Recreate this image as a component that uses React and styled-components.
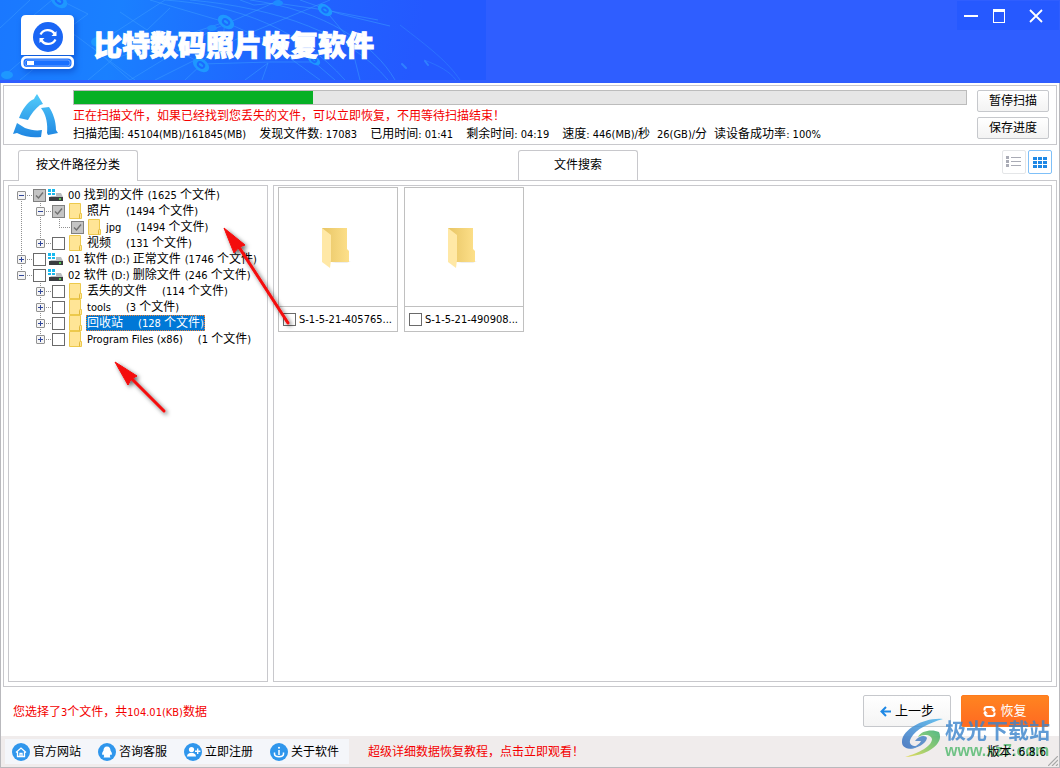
import React, { useState } from "react";
import styled, { createGlobalStyle, css } from "styled-components";

const line = "#c8c8cc";
const red = "#f40000";

const GlobalStyle = createGlobalStyle`
  * { box-sizing: border-box; }
  body {
    margin: 0;
    color: #000;
    background: #fff;
    font: 12px/16px "DejaVu Sans Condensed", "Noto Sans CJK SC", sans-serif;
  }
  button, input { font: inherit; color: inherit; margin: 0; }
  button { padding: 0; cursor: pointer; }
  ul { list-style: none; margin: 0; padding: 0; }
  p { margin: 0; }
`;

const Window = styled.div`
  position: relative;
  display: flex;
  flex-direction: column;
  min-height: 100vh;
  border: solid #b9b9bd;
  border-width: 0 1px 1px;
  background: #fff;
`;

/* Latin letters and digits are set one size below the Chinese text. */
const Latin = styled.span`
  font-size: 11px;
`;

const Mixed = ({ text }) =>
  text
    .split(/([\x20-\x7e]+)/)
    .filter(Boolean)
    .map((run, i) => (/^[\x20-\x7e]/.test(run) ? <Latin key={i}>{run}</Latin> : run));

/* ---------- header ---------- */

const Header = styled.header`
  display: flex;
  justify-content: space-between;
  align-items: flex-start;
  height: 83px;
  margin: 0 -1px;
  background: #2f5eff;
`;

const Brand = styled.div`
  position: relative;
  display: flex;
  align-items: flex-start;
  gap: 18px;
  width: 486px;
  height: 80px;
  padding: 14px 0 0 20px;
  background: linear-gradient(100deg, #1a78ff 0, #1a80ff 24%, #1f68ff 52%, #2459ff 85%);
`;

const BrandArt = styled.svg`
  position: absolute;
  inset: 0;
`;

const Logo = styled.svg`
  position: relative;
  flex: none;
  filter: drop-shadow(2px 3px 3px rgba(0, 40, 160, 0.4));
`;

const Title = styled.h1`
  position: relative;
  margin: 0;
  padding-top: 10px;
  font: 900 28px/40px "Noto Sans CJK SC", sans-serif;
  color: #fff;
  -webkit-text-stroke: 1px #fff;
  white-space: nowrap;
`;

const WindowControls = styled.div`
  display: flex;
  align-items: center;
  margin: 1px 1px 0 0;
  height: 29px;
  background: #2659ff;
`;

const WindowButton = styled.button`
  display: grid;
  place-items: center;
  width: ${(p) => (p.$wide ? 46 : 28)}px;
  height: 29px;
  border: 0;
  background: none;
`;

/* ---------- scan status ---------- */

const ScanPanel = styled.section`
  display: flex;
  margin: 2px 2px 0;
  height: 60px;
  padding: 4px 7px 4px 9px;
  border: 1px solid ${line};
`;

const ScanBody = styled.div`
  flex: 1;
  min-width: 0;
  margin: 0 10px 0 14px;
`;

const ProgressTrack = styled.div`
  height: 15px;
  border: 1px solid #bcbcbc;
  background: #e6e6e6;
`;

const ProgressFill = styled.div`
  height: 100%;
  background: #06b025;
`;

const Notice = styled.p`
  padding-top: 3px;
  color: ${red};
  white-space: nowrap;
`;

const Stats = styled.p`
  display: flex;
  gap: 13px;
  padding-top: 2px;
  white-space: nowrap;
`;

const StatGroup = styled.span`
  display: flex;
  gap: 7px;
`;

const ScanButtons = styled.div`
  display: flex;
  flex-direction: column;
  gap: 5px;
`;

const SmallButton = styled.button`
  width: 72px;
  height: 22px;
  border: 1px solid #c6c8cc;
  border-radius: 2px;
  background: linear-gradient(#fff, #f3f3f3);
`;

/* ---------- tabs ---------- */

const TabBar = styled.div`
  display: flex;
  height: 35px;
  padding: 5px 7px 0 17px;
`;

const Tab = styled.button`
  position: relative;
  width: 120px;
  height: ${(p) => (p.$active ? 31 : 30)}px;
  padding-bottom: ${(p) => (p.$active ? 2 : 1)}px;
  margin-right: ${(p) => (p.$spaced ? 380 : 0)}px;
  border: 1px solid ${line};
  border-bottom: 0;
  border-radius: 3px 3px 0 0;
  background: #fff;
`;

const ViewSwitch = styled.div`
  display: flex;
  gap: 2px;
  margin-left: auto;
`;

const ViewButton = styled.button`
  display: grid;
  place-items: center;
  width: 24px;
  height: 24px;
  border: 1px solid ${(p) => (p.$active ? "#7fc0f8" : "#e4e6e8")};
  border-radius: 2px;
  background: #fff;
  color: ${(p) => (p.$active ? "#1e88e5" : "#a9abb5")};
`;

/* ---------- content ---------- */

const Content = styled.main`
  flex: 1;
  display: flex;
  gap: 5px;
  margin: 0 2px;
  padding: 4px;
  border: 1px solid ${line};
`;

const TreePanel = styled.div`
  width: 260px;
  flex: none;
  padding: 1px 0 0 3px;
  border: 1px solid ${line};
`;

const FilePanel = styled.div`
  flex: 1;
  min-width: 0;
  display: flex;
  align-items: flex-start;
  gap: 6px;
  padding: 1px 4px;
  border: 1px solid ${line};
`;

const Row = styled.li`
  display: flex;
  align-items: center;
  height: 16px;
  white-space: nowrap;
`;

const dotsV = "repeating-linear-gradient(#909090 0 1px, transparent 1px 2px)";
const dotsH = "repeating-linear-gradient(90deg, #909090 0 1px, transparent 1px 2px)";
const guides = {
  none: css``,
  through: css`background: ${dotsV} 9px 0 / 1px 16px no-repeat;`,
  tee: css`background: ${dotsV} 9px 0 / 1px 16px no-repeat, ${dotsH} 9px 8px / 12px 1px no-repeat;`,
  end: css`background: ${dotsV} 9px 0 / 1px 8px no-repeat, ${dotsH} 9px 8px / 12px 1px no-repeat;`,
  start: css`background: ${dotsV} 9px 8px / 1px 8px no-repeat, ${dotsH} 9px 8px / 12px 1px no-repeat;`,
};

const Guide = styled.span`
  flex: none;
  width: ${(p) => (p.$last ? 21 : 19)}px;
  height: 16px;
  padding: 4px 0 0 5px;
  ${(p) => guides[p.$kind]}
`;

const Expander = styled.button`
  display: block;
  width: 9px;
  height: 9px;
  border: 1px solid #919191;
  border-radius: 1px;
  background:
    linear-gradient(#31479a, #31479a) center / 5px 1px no-repeat,
    ${(p) => (p.$open ? "" : "linear-gradient(#31479a, #31479a) center / 1px 5px no-repeat,")}
    #f4f4f4;
`;

const Check = styled.input`
  appearance: none;
  flex: none;
  width: 13px;
  height: 13px;
  border: 1px solid #6a6a6a;
  background: #fff;
  &:checked {
    border-color: #808080;
    background: #c4c4c4
      url("data:image/svg+xml,%3Csvg xmlns='http://www.w3.org/2000/svg' width='11' height='11'%3E%3Cpath d='M2 5.5l2.5 2.5L9 2.5' fill='none' stroke='%23707070' stroke-width='1.4'/%3E%3C/svg%3E");
  }
`;

const NodeIcon = styled.svg`
  flex: none;
  margin: 0 3px 0 2px;
`;

const NodeLabel = styled.label`
  display: flex;
  gap: ${(p) => (p.$root ? 4 : 15)}px;
  height: 16px;
  padding: 0 1px;
  ${(p) =>
    p.$selected &&
    css`
      color: #fff;
      background: #0078d7;
      outline: 1px dotted #f08030;
      outline-offset: -1px;
    `}
`;

const Tile = styled.figure`
  width: 120px;
  margin: 0;
  border: 1px solid #c0c0c0;
`;

const Thumb = styled.div`
  display: flex;
  align-items: center;
  height: 119px;
  padding: 2px 0 0 42px;
  border-bottom: 1px solid #c0c0c0;
`;

const Caption = styled.figcaption`
  display: flex;
  align-items: center;
  gap: 3px;
  height: 24px;
  padding: 0 4px;
`;

const FileName = styled.label`
  white-space: nowrap;
`;

/* ---------- footer ---------- */

const Actions = styled.section`
  display: flex;
  align-items: center;
  gap: 10px;
  height: 49px;
  padding: 0 10px 1px 12px;
`;

const Selection = styled.p`
  flex: 1;
  padding-top: 3px;
  color: ${red};
`;

const ActionButton = styled.button`
  display: flex;
  align-items: center;
  justify-content: center;
  gap: 4px;
  width: 88px;
  height: 32px;
  font-size: 13px;
  border: 1px solid ${(p) => (p.$primary ? "#ff7a1c" : "#c6c8cc")};
  border-radius: 2px;
  color: ${(p) => (p.$primary ? "#fff" : "#000")};
  background: ${(p) => (p.$primary ? "linear-gradient(#ff8420, #ff6a22)" : "linear-gradient(#fff, #f4f4f4)")};
`;

const StatusBar = styled.footer`
  display: flex;
  align-items: center;
  height: 31px;
  padding: 0 13px 0 4px;
  background: #f0ecec;
`;

const Links = styled.nav`
  display: flex;
  align-items: center;
  gap: 17px;
  height: 25px;
  padding: 0 10px 0 7px;
  background: #f4f6fa;
`;

const FootLink = styled.a`
  display: flex;
  align-items: center;
  gap: 3px;
  color: #000;
  text-decoration: none;
`;

const Promo = styled.a`
  margin-left: 19px;
  color: ${red};
  text-decoration: none;
`;

const Version = styled.span`
  position: relative;
  z-index: 1;
  margin-left: auto;
`;

const Grip = styled.svg`
  position: absolute;
  right: 1px;
  bottom: 1px;
`;

/* ---------- overlays ---------- */

const Overlay = styled.svg`
  position: absolute;
  left: 0;
  top: 0;
  pointer-events: none;
`;

const Watermark = styled.div`
  position: absolute;
  right: 9px;
  bottom: 7px;
  display: flex;
  align-items: center;
  gap: 2px;
  opacity: 0.8;
  pointer-events: none;
`;

const WatermarkText = styled.div`
  font: 700 21px/26px "Noto Sans CJK SC", sans-serif;
  color: #3a84cc;
  white-space: nowrap;
`;

const WatermarkUrl = styled.div`
  font: 700 16px/18px "Liberation Sans", sans-serif;
  color: #50b86c;
`;

const FolderIcon = () => (
  <NodeIcon width="16" height="16" viewBox="0 0 16 16" aria-hidden="true">
    <path d="M2.500 .5H13.500V10.500H14.500V15.500H2.500Z" fill="#ffe596" stroke="#edc94c" />
    <path d="M12.500 15.500V11.500Q12.500 10.500 13.500 10.500" fill="none" stroke="#e0b73c" />
  </NodeIcon>
);

const DriveIcon = () => (
  <NodeIcon width="16" height="16" viewBox="0 0 16 16" aria-hidden="true">
    <path d="M0 2h3v3H0zM4 2h3v3H4zM0 6h3v2H0zM4 6h3v2H4z" fill="#18b9ee" />
    <path d="M8 6H13L15 10H2L3 9H8Z" fill="#b9bdc0" />
    <rect x="1" y="10" width="14" height="4" fill="#3a3d40" />
    <rect x="11" y="11" width="2" height="2" fill="#52c852" />
  </NodeIcon>
);

const BigFolder = ({ id }) => (
  <svg width="30" height="42" viewBox="0 0 30 42" aria-hidden="true">
    <defs>
      <linearGradient id={id} x1="0" x2="1">
        <stop offset="0" stopColor="#e8c565" />
        <stop offset="1" stopColor="#fde08a" />
      </linearGradient>
    </defs>
    <path d="M20 34h10l-4 2H10z" fill="#eee" />
    <path d="M1 1H26V22L28 24V35H1Z" fill={`url(#${id})`} />
    <path d="M1 1L10 8V33L9 41L1 35Z" fill="#ffe8a6" />
  </svg>
);

const footIcons = {
  home: <path d="M4 9.500L9 5L14 9.500M5.500 9V13.500H12.500V9M8 13.500V10.500H10V13.500" fill="none" stroke="#fff" strokeWidth="1.300" />,
  chat: <path d="M9 3.500C11.500 3.500 12.500 5.500 12.500 7.500C13.500 9 14.500 10.500 13.500 12L12.500 11.500L11.800 13L12.500 14.500H5.500L6.200 13L5.500 11.500L4.500 12C3.500 10.500 4.500 9 5.500 7.500C5.500 5.500 6.500 3.500 9 3.500Z" fill="#fff" />,
  user: (
    <g fill="#fff">
      <circle cx="7.500" cy="6.500" r="2.600" />
      <path d="M3 13.500C3 8.500 12 8.500 12 13.500ZM11 7.500h2v-2h1.400v2h2v1.400h-2v2H13v-2h-2z" />
    </g>
  ),
  about: (
    <g fill="none" stroke="#fff" strokeWidth="1.500">
      <path d="M9 7V12M4.500 9.500V11C4.500 14.500 13.500 14.500 13.500 11V9.500" />
      <circle cx="9" cy="4.800" r="1" fill="#fff" stroke="none" />
    </g>
  ),
};

const links = [
  ["home", "官方网站"],
  ["chat", "咨询客服"],
  ["user", "立即注册"],
  ["about", "关于软件"],
];

const nodes = [
  { g: ["start"], open: true, on: true, name: "00 找到的文件", count: "(1625 个文件)" },
  { g: ["through", "tee"], open: true, on: true, name: "照片", count: "(1494 个文件)" },
  { g: ["through", "through", "end"], leaf: true, on: true, name: "jpg", count: "(1494 个文件)" },
  { g: ["through", "end"], name: "视频", count: "(131 个文件)" },
  { g: ["tee"], name: "01 软件 (D:) 正常文件", count: "(1746 个文件)" },
  { g: ["end"], open: true, name: "02 软件 (D:) 删除文件", count: "(246 个文件)" },
  { g: ["none", "tee"], name: "丢失的文件", count: "(114 个文件)" },
  { g: ["none", "tee"], name: "tools", count: "(3 个文件)" },
  { g: ["none", "tee"], name: "回收站", count: "(128 个文件)", selected: true },
  { g: ["none", "end"], name: "Program Files (x86)", count: "(1 个文件)" },
];

function TreeNode({ node, index }) {
  const [on, setOn] = useState(!!node.on);
  const root = node.g.length === 1;
  return (
    <Row>
      {node.g.map((kind, i) => {
        const last = i === node.g.length - 1;
        return (
          <Guide key={i} $kind={kind} $last={last}>
            {last && !node.leaf && <Expander $open={node.open} aria-label="展开或折叠" />}
          </Guide>
        );
      })}
      <Check type="checkbox" id={`node-${index}`} checked={on} onChange={() => setOn(!on)} />
      {root ? <DriveIcon /> : <FolderIcon />}
      <NodeLabel htmlFor={`node-${index}`} $root={root} $selected={node.selected}>
        <span><Mixed text={node.name} /></span>
        <span><Mixed text={node.count} /></span>
      </NodeLabel>
    </Row>
  );
}

const Ring = ({ x, y, r = 7 }) => (
  <g transform={`rotate(35 ${x} ${y})`}>
    <ellipse cx={x} cy={y} rx={r + 2} ry={r - 1} fill="#1e98ff" />
    <ellipse cx={x} cy={y} rx={r / 2} ry={r / 3} fill="none" stroke="#1b6cff" strokeWidth="2" />
  </g>
);

const HeaderArt = () => (
  <BrandArt width="486" height="80" viewBox="0 0 486 80" aria-hidden="true">
    <g fill="none" stroke="#3a9aff" strokeOpacity=".55" strokeWidth="1">
      <path d="M0 28L30 0M5 75L48 38L28 20L52 0M60 0L88 14L50 42M20 80L75 35L60 20M75 35L135 80M88 80L112 60M92 47L130 80M100 42L165 0M120 12L147 30L170 8M150 0L225 22L265 40L320 80" />
      <path d="M165 0C240 5 300 30 345 80M190 0C280 8 350 35 388 80M250 0C325 10 375 45 395 80M300 0L340 14L390 26M240 0L254 5L276 3L325 10L378 20" />
      <path d="M110 60L225 22M130 80L212 30L280 0M155 80L245 35L330 0M185 80L202 64L270 62L314 62L335 80M202 64L170 46M245 80L268 63L262 80M225 22L222 45L200 64M325 10L350 40L360 80" />
      <path d="M400 25C430 48 448 62 460 80M424 60C440 66 450 72 456 80M424 88L438 100" strokeOpacity=".35" />
    </g>
    <g stroke="#2f80ff" strokeWidth="2" strokeLinecap="round">
      <path d="M402 64L406 68M425 61L428 65" />
    </g>
    <Ring x={59} y={1} />
    <Ring x={226} y={22} />
    <Ring x={201} y={65} />
    <Ring x={325} y={10} r={6} />
    <Ring x={314} y={60} r={5} />
    <ellipse cx="7" cy="75" rx="6" ry="4" fill="#1e98ff" />
    <ellipse cx="98" cy="42" rx="7" ry="5" fill="#1e98ff" />
    <ellipse cx="278" cy="3" rx="5" ry="3" fill="#1e8cff" />
    <ellipse cx="212" cy="28" rx="5" ry="3" fill="#1e8cff" />
  </BrandArt>
);

const stats = ["扫描范围: 45104(MB)/161845(MB)", "发现文件数: 17083", "已用时间: 01:41", "剩余时间: 04:19"];
const speeds = ["速度: 446(MB)/秒", "26(GB)/分", "读设备成功率: 100%"];

export default function App() {
  const [grid, setGrid] = useState(true);
  return (
    <>
      <GlobalStyle />
      <Window>
        <Header>
          <Brand>
            <HeaderArt />
            <Logo width="56" height="57" viewBox="0 0 56 57" aria-hidden="true">
              <path d="M6 1H49Q54 1 54 6V41H1V6Q1 1 6 1Z" fill="#fff" />
              <rect x="2" y="43" width="51" height="11" rx="4" fill="#fff" stroke="#fff" strokeWidth="2" />
              <rect x="3.500" y="44.500" width="48" height="8.500" rx="3.500" fill="#1a70ff" />
              <rect x="5" y="46" width="45" height="6" rx="2.500" fill="none" stroke="#fff" strokeOpacity=".35" />
              <rect x="7" y="47" width="7" height="4" fill="#fff" />
              <circle cx="28" cy="23" r="15" fill="#1a66f5" />
              <g fill="none" stroke="#fff" strokeWidth="2.200">
                <path d="M20.500 20.500A8 7.500 0 0 1 34.500 19.500" />
                <path d="M35.500 25.500A8 7.500 0 0 1 21.500 26.500" />
              </g>
              <path d="M36.500 17V22H31.500ZM19.500 29V24H24.500Z" fill="#fff" />
            </Logo>
            <Title>比特数码照片恢复软件</Title>
          </Brand>
          <WindowControls>
            <WindowButton aria-label="最小化">
              <svg width="14" height="14"><path d="M0 6h14v2H0z" fill="#fff" /></svg>
            </WindowButton>
            <WindowButton aria-label="最大化">
              <svg width="14" height="14"><path d="M1 0h12v14H1zM2 3v10h10V3z" fill="#fff" fillRule="evenodd" /></svg>
            </WindowButton>
            <WindowButton $wide aria-label="关闭">
              <svg width="14" height="14"><path d="M1 1L13 13M13 1L1 13" stroke="#fff" strokeWidth="1.800" /></svg>
            </WindowButton>
          </WindowControls>
        </Header>

        <ScanPanel>
          <svg width="46" height="50" viewBox="0 0 46 50" aria-hidden="true">
            <defs>
              <linearGradient id="tri" x1="0" y1="4" x2="0" y2="47" gradientUnits="userSpaceOnUse">
                <stop offset="0" stopColor="#52ccfa" />
                <stop offset="1" stopColor="#1f86e2" />
              </linearGradient>
            </defs>
            <g fill="url(#tri)">
              <path d="M24 4L30 14L27 15C22 19 18 24 15 30L6 28C9 20 14 12 21 9L22 7Z" />
              <path d="M28 18L36 17C40 23 43 31 43 40L45 43L35 45L34 43C35 34 33 26 30 21Z" />
              <path d="M4 33L12 38C18 40 23 41 29 40L28 47C20 48 12 47 4 43L0 44Z" />
            </g>
          </svg>
          <ScanBody>
            <ProgressTrack role="progressbar" aria-valuenow={27}>
              <ProgressFill style={{ width: "26.8%" }} />
            </ProgressTrack>
            <Notice>正在扫描文件，如果已经找到您丢失的文件，可以立即恢复，不用等待扫描结束！</Notice>
            <Stats>
              {stats.map((s) => (
                <span key={s}><Mixed text={s} /></span>
              ))}
              <StatGroup>
                {speeds.map((s) => (
                  <span key={s}><Mixed text={s} /></span>
                ))}
              </StatGroup>
            </Stats>
          </ScanBody>
          <ScanButtons>
            <SmallButton>暂停扫描</SmallButton>
            <SmallButton>保存进度</SmallButton>
          </ScanButtons>
        </ScanPanel>

        <TabBar role="tablist">
          <Tab role="tab" aria-selected="true" $active $spaced>按文件路径分类</Tab>
          <Tab role="tab" aria-selected="false">文件搜索</Tab>
          <ViewSwitch>
            <ViewButton $active={!grid} onClick={() => setGrid(false)} aria-label="列表视图">
              <svg width="16" height="12" fill="currentColor">
                <path d="M0 0h3v3H0zM0 4h3v3H0zM0 8h3v3H0zM5 1h10v1H5zM5 5h10v1H5zM5 9h10v1H5z" />
              </svg>
            </ViewButton>
            <ViewButton $active={grid} onClick={() => setGrid(true)} aria-label="网格视图">
              <svg width="14" height="11" fill="currentColor">
                <path d="M0 0h4v3H0zM5 0h4v3H5zM10 0h4v3h-4zM0 4h4v3H0zM5 4h4v3H5zM10 4h4v3h-4zM0 8h4v3H0zM5 8h4v3H5zM10 8h4v3h-4z" />
              </svg>
            </ViewButton>
          </ViewSwitch>
        </TabBar>

        <Content>
          <TreePanel>
            <ul>
              {nodes.map((n, i) => (
                <TreeNode key={n.name} node={n} index={i} />
              ))}
            </ul>
          </TreePanel>
          <FilePanel>
            {["S-1-5-21-405765...", "S-1-5-21-490908..."].map((name, i) => (
              <Tile key={name}>
                <Thumb>
                  <BigFolder id={`folder-${i}`} />
                </Thumb>
                <Caption>
                  <Check type="checkbox" id={`file-${i}`} />
                  <FileName htmlFor={`file-${i}`}><Mixed text={name} /></FileName>
                </Caption>
              </Tile>
            ))}
          </FilePanel>
        </Content>

        <Actions>
          <Selection><Mixed text="您选择了3个文件，共104.01(KB)数据" /></Selection>
          <ActionButton>
            <svg width="11" height="11" aria-hidden="true">
              <path d="M11 5.500H2M6 1L1.500 5.500L6 10" fill="none" stroke="#1e88e5" strokeWidth="2" />
            </svg>
            上一步
          </ActionButton>
          <ActionButton $primary>
            <svg width="13" height="13" aria-hidden="true">
              <g fill="none" stroke="#fff" strokeWidth="2">
                <path d="M1.500 5.500V4Q1.500 2 4 2H8Q11 2 11 5" />
                <path d="M11.500 7.500V9Q11.500 11 9 11H5Q2 11 2 8" />
              </g>
              <path d="M8 4.500H13L11 7.500ZM0 8.500H5L2 5.500Z" fill="#fff" />
            </svg>
            恢复
          </ActionButton>
        </Actions>

        <StatusBar>
          <Links>
            {links.map(([icon, text]) => (
              <FootLink key={icon} href="#">
                <svg width="18" height="18" aria-hidden="true">
                  <circle cx="9" cy="9" r="9" fill="#2f96ec" />
                  {footIcons[icon]}
                </svg>
                {text}
              </FootLink>
            ))}
          </Links>
          <Promo href="#">超级详细数据恢复教程，点击立即观看！</Promo>
          <Version>版本: 6.8.6</Version>
        </StatusBar>

        <Grip width="10" height="10" aria-hidden="true">
          <path d="M0 10L10 0M4 10L10 4M8 10L10 8" stroke="#a8a8a8" strokeWidth="1.200" />
        </Grip>

        <Watermark>
          <svg width="42" height="42" viewBox="0 0 42 42" aria-hidden="true">
            <defs>
              <linearGradient id="swB" x1="0" y1="1" x2="1" y2="0">
                <stop offset="0" stopColor="#2c62b8" />
                <stop offset="1" stopColor="#44b4ee" />
              </linearGradient>
              <linearGradient id="swG" x1="0" y1="1" x2="1" y2="0">
                <stop offset="0" stopColor="#e6d83c" />
                <stop offset="0.500" stopColor="#7cc456" />
                <stop offset="1" stopColor="#2aa868" />
              </linearGradient>
            </defs>
            <path d="M42 2C24 0 2 12 1 24C0 33 12 33 17 29C10 30 7 26 10 21C15 12 28 6 42 2Z" fill="url(#swB)" />
            <path d="M17 20C20 13 32 12 38 15C43 25 30 38 4 40C18 36 31 29 31 22C30 17 22 17 17 20Z" fill="url(#swG)" />
            <path d="M14 24C18 18 25 18 26 21C25 27 16 32 6 32C14 30 19 27 20 24Z" fill="#3f7cc4" />
          </svg>
          <div>
            <WatermarkText>极光下载站</WatermarkText>
            <WatermarkUrl>www.xz7.com</WatermarkUrl>
          </div>
        </Watermark>

        <Overlay width="300" height="430" viewBox="0 0 300 430" aria-hidden="true">
          <defs>
            <filter id="shade" x="-20%" y="-20%" width="150%" height="150%">
              <feDropShadow dx="2" dy="2" stdDeviation="2" floodColor="#000" floodOpacity=".6" />
            </filter>
          </defs>
          <g filter="url(#shade)" fill="#f40808" stroke="#f40808">
            <path d="M234 241L287 323" strokeWidth="3" strokeLinecap="round" />
            <path d="M223 228L244 245L238 247L233 253Z" strokeWidth="1" />
            <path d="M126 374L163 411" strokeWidth="3" strokeLinecap="round" />
            <path d="M114 362L136 376L130 379L127 385Z" strokeWidth="1" />
          </g>
        </Overlay>
      </Window>
    </>
  );
}
